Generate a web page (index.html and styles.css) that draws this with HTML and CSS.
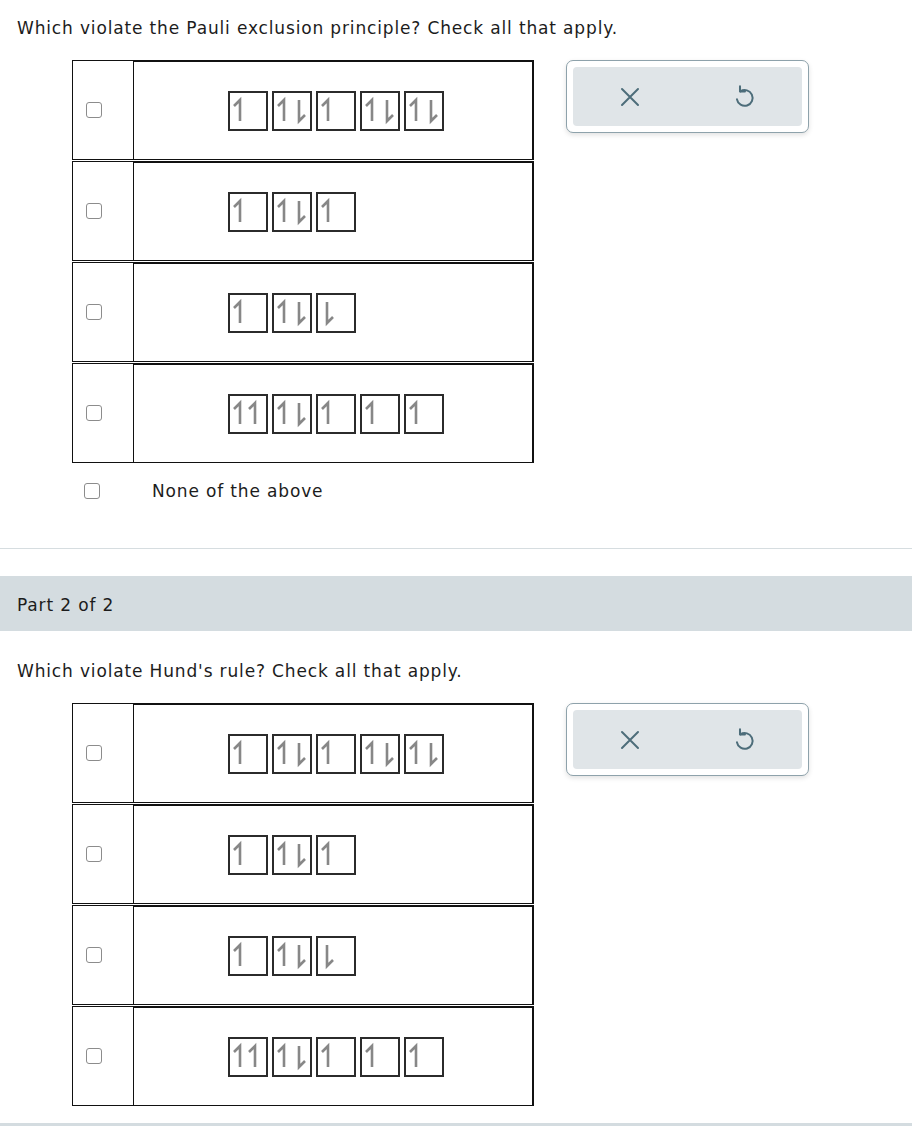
FILE: index.html
```html
<!DOCTYPE html>
<html>
<head>
<meta charset="utf-8">
<link rel="stylesheet" href="styles.css">
</head>
<body>
<svg width="0" height="0" class="defs">
  <defs>
    <symbol id="up" viewBox="0 0 40 40"><path d="M12 30V9L6 15" fill="none" stroke="#878787" stroke-width="2.6" stroke-linejoin="miter"/></symbol>
    <symbol id="up2" viewBox="0 0 40 40"><path d="M27 30V9L21 15" fill="none" stroke="#878787" stroke-width="2.6"/></symbol>
    <symbol id="dn" viewBox="0 0 40 40"><path d="M27 9V30L33 24" fill="none" stroke="#878787" stroke-width="2.6"/></symbol>
    <symbol id="dn1" viewBox="0 0 40 40"><path d="M11 9V30L17 24" fill="none" stroke="#878787" stroke-width="2.6"/></symbol>
    <symbol id="box" viewBox="0 0 40 40"><rect x="1" y="1" width="38" height="38" fill="#fff" stroke="#2b2b2b" stroke-width="2"/></symbol>
  </defs>
</svg>

<section class="part">
  <p class="prompt">Which violate the Pauli exclusion principle? Check all that apply.</p>
  <div class="answer">
    <div class="choices">
      <div class="grid">
        <div class="row">
          <div class="cell-check"><span class="checkbox"></span></div>
          <div class="cell-img">
            <div class="orbitals">
              <svg class="orb" viewBox="0 0 40 40"><use href="#box"/><use href="#up"/></svg>
              <svg class="orb" viewBox="0 0 40 40"><use href="#box"/><use href="#up"/><use href="#dn"/></svg>
              <svg class="orb" viewBox="0 0 40 40"><use href="#box"/><use href="#up"/></svg>
              <svg class="orb" viewBox="0 0 40 40"><use href="#box"/><use href="#up"/><use href="#dn"/></svg>
              <svg class="orb" viewBox="0 0 40 40"><use href="#box"/><use href="#up"/><use href="#dn"/></svg>
            </div>
          </div>
        </div>
        <div class="row">
          <div class="cell-check"><span class="checkbox"></span></div>
          <div class="cell-img">
            <div class="orbitals">
              <svg class="orb" viewBox="0 0 40 40"><use href="#box"/><use href="#up"/></svg>
              <svg class="orb" viewBox="0 0 40 40"><use href="#box"/><use href="#up"/><use href="#dn"/></svg>
              <svg class="orb" viewBox="0 0 40 40"><use href="#box"/><use href="#up"/></svg>
            </div>
          </div>
        </div>
        <div class="row">
          <div class="cell-check"><span class="checkbox"></span></div>
          <div class="cell-img">
            <div class="orbitals">
              <svg class="orb" viewBox="0 0 40 40"><use href="#box"/><use href="#up"/></svg>
              <svg class="orb" viewBox="0 0 40 40"><use href="#box"/><use href="#up"/><use href="#dn"/></svg>
              <svg class="orb" viewBox="0 0 40 40"><use href="#box"/><use href="#dn1"/></svg>
            </div>
          </div>
        </div>
        <div class="row">
          <div class="cell-check"><span class="checkbox"></span></div>
          <div class="cell-img">
            <div class="orbitals">
              <svg class="orb" viewBox="0 0 40 40"><use href="#box"/><use href="#up"/><use href="#up2"/></svg>
              <svg class="orb" viewBox="0 0 40 40"><use href="#box"/><use href="#up"/><use href="#dn"/></svg>
              <svg class="orb" viewBox="0 0 40 40"><use href="#box"/><use href="#up"/></svg>
              <svg class="orb" viewBox="0 0 40 40"><use href="#box"/><use href="#up"/></svg>
              <svg class="orb" viewBox="0 0 40 40"><use href="#box"/><use href="#up"/></svg>
            </div>
          </div>
        </div>
      </div>
      <label class="none"><span class="checkbox"></span><span class="none-text">None of the above</span></label>
    </div>
    <div class="tools">
      <div class="tools-inner">
        <button class="tool" aria-label="Clear">
          <svg viewBox="0 0 24 24" width="24" height="24"><path d="M4 4L20 20M20 4L4 20" fill="none" stroke="#4d6d7a" stroke-width="2" stroke-linecap="round"/></svg>
        </button>
        <button class="tool" aria-label="Undo">
          <svg viewBox="0 0 24 24" width="27" height="27"><path d="M8.4 7.4A7 7 0 1 1 5.3 14.5" fill="none" stroke="#4d6d7a" stroke-width="1.8" stroke-linecap="round"/><path d="M8 3V7.6H12.4" fill="none" stroke="#4d6d7a" stroke-width="1.8" stroke-linecap="round" stroke-linejoin="round"/></svg>
        </button>
      </div>
    </div>
  </div>
</section>

<hr class="sep">
<div class="part-bar">Part 2 of 2</div>

<section class="part part-two">
  <p class="prompt">Which violate Hund's rule? Check all that apply.</p>
  <div class="answer">
    <div class="choices">
      <div class="grid">
        <div class="row">
          <div class="cell-check"><span class="checkbox"></span></div>
          <div class="cell-img">
            <div class="orbitals">
              <svg class="orb" viewBox="0 0 40 40"><use href="#box"/><use href="#up"/></svg>
              <svg class="orb" viewBox="0 0 40 40"><use href="#box"/><use href="#up"/><use href="#dn"/></svg>
              <svg class="orb" viewBox="0 0 40 40"><use href="#box"/><use href="#up"/></svg>
              <svg class="orb" viewBox="0 0 40 40"><use href="#box"/><use href="#up"/><use href="#dn"/></svg>
              <svg class="orb" viewBox="0 0 40 40"><use href="#box"/><use href="#up"/><use href="#dn"/></svg>
            </div>
          </div>
        </div>
        <div class="row">
          <div class="cell-check"><span class="checkbox"></span></div>
          <div class="cell-img">
            <div class="orbitals">
              <svg class="orb" viewBox="0 0 40 40"><use href="#box"/><use href="#up"/></svg>
              <svg class="orb" viewBox="0 0 40 40"><use href="#box"/><use href="#up"/><use href="#dn"/></svg>
              <svg class="orb" viewBox="0 0 40 40"><use href="#box"/><use href="#up"/></svg>
            </div>
          </div>
        </div>
        <div class="row">
          <div class="cell-check"><span class="checkbox"></span></div>
          <div class="cell-img">
            <div class="orbitals">
              <svg class="orb" viewBox="0 0 40 40"><use href="#box"/><use href="#up"/></svg>
              <svg class="orb" viewBox="0 0 40 40"><use href="#box"/><use href="#up"/><use href="#dn"/></svg>
              <svg class="orb" viewBox="0 0 40 40"><use href="#box"/><use href="#dn1"/></svg>
            </div>
          </div>
        </div>
        <div class="row">
          <div class="cell-check"><span class="checkbox"></span></div>
          <div class="cell-img">
            <div class="orbitals">
              <svg class="orb" viewBox="0 0 40 40"><use href="#box"/><use href="#up"/><use href="#up2"/></svg>
              <svg class="orb" viewBox="0 0 40 40"><use href="#box"/><use href="#up"/><use href="#dn"/></svg>
              <svg class="orb" viewBox="0 0 40 40"><use href="#box"/><use href="#up"/></svg>
              <svg class="orb" viewBox="0 0 40 40"><use href="#box"/><use href="#up"/></svg>
              <svg class="orb" viewBox="0 0 40 40"><use href="#box"/><use href="#up"/></svg>
            </div>
          </div>
        </div>
      </div>
    </div>
    <div class="tools">
      <div class="tools-inner">
        <button class="tool" aria-label="Clear">
          <svg viewBox="0 0 24 24" width="24" height="24"><path d="M4 4L20 20M20 4L4 20" fill="none" stroke="#4d6d7a" stroke-width="2" stroke-linecap="round"/></svg>
        </button>
        <button class="tool" aria-label="Undo">
          <svg viewBox="0 0 24 24" width="27" height="27"><path d="M8.4 7.4A7 7 0 1 1 5.3 14.5" fill="none" stroke="#4d6d7a" stroke-width="1.8" stroke-linecap="round"/><path d="M8 3V7.6H12.4" fill="none" stroke="#4d6d7a" stroke-width="1.8" stroke-linecap="round" stroke-linejoin="round"/></svg>
        </button>
      </div>
    </div>
  </div>
</section>
<div class="bottom-line"></div>
</body>
</html>
```
FILE: styles.css
```css
html, body {
  margin: 0;
  padding: 0;
  background: #fff;
}
body {
  font-family: "DejaVu Sans", Verdana, sans-serif;
  font-size: 17px;
  letter-spacing: 0.85px;
  color: #1c1c1c;
  overflow: hidden;
}
.defs {
  position: absolute;
  width: 0;
  height: 0;
}
.prompt {
  margin: 0;
  padding: 16px 17px 0;
  line-height: 24px;
}
.part-two .prompt {
  padding-top: 28px;
}
.answer {
  display: flex;
  align-items: flex-start;
  gap: 32px;
  padding-left: 72px;
  margin-top: 20px;
}
.grid {
  display: flex;
  flex-direction: column;
  gap: 1px;
}
.row {
  display: flex;
  height: 100px;
}
.cell-check {
  box-sizing: border-box;
  width: 61px;
  border-left: 1px solid #111;
  border-top: 1px solid #111;
  border-bottom: 1px solid #111;
  display: flex;
  align-items: center;
  padding-left: 13px;
}
.cell-img {
  width: 401px;
  box-sizing: border-box;
  border-top: 2px solid #111;
  border-right: 2px solid #111;
  border-bottom: 1px solid #111;
  border-left: 1px solid #111;
  display: flex;
  align-items: center;
  padding-left: 94px;
}
.orbitals {
  display: flex;
  gap: 4px;
}
.orb {
  width: 40px;
  height: 40px;
  display: block;
}
.checkbox {
  display: inline-block;
  width: 16px;
  height: 16px;
  box-sizing: border-box;
  border: 1.5px solid #8c8c8c;
  border-radius: 3px;
  background: #fff;
}
.none {
  display: flex;
  align-items: center;
  height: 20px;
  margin-top: 18px;
  padding-left: 12px;
}
.none-text {
  margin-left: 52px;
}
.tools {
  width: 243px;
  height: 73px;
  box-sizing: border-box;
  border: 1px solid #8ea2ab;
  border-radius: 7px;
  padding: 6px;
  background: #fff;
  box-shadow: 0 2px 5px rgba(0, 0, 0, 0.12);
}
.tools-inner {
  display: flex;
  height: 100%;
  background: #e0e5e8;
  border-radius: 4px;
}
.tool {
  flex: 1;
  border: 0;
  background: transparent;
  padding: 0;
  display: flex;
  align-items: center;
  justify-content: center;
}
.sep {
  margin: 47px 0 0;
  border: 0;
  height: 1px;
  background: #d6dde0;
}
.part-bar {
  margin-top: 27px;
  height: 55px;
  background: #d4dce0;
  display: flex;
  align-items: center;
  padding-left: 17px;
  padding-top: 2px;
  box-sizing: border-box;
}
.bottom-line {
  margin-top: 17px;
  height: 3px;
  background: #d4dce0;
}
```
